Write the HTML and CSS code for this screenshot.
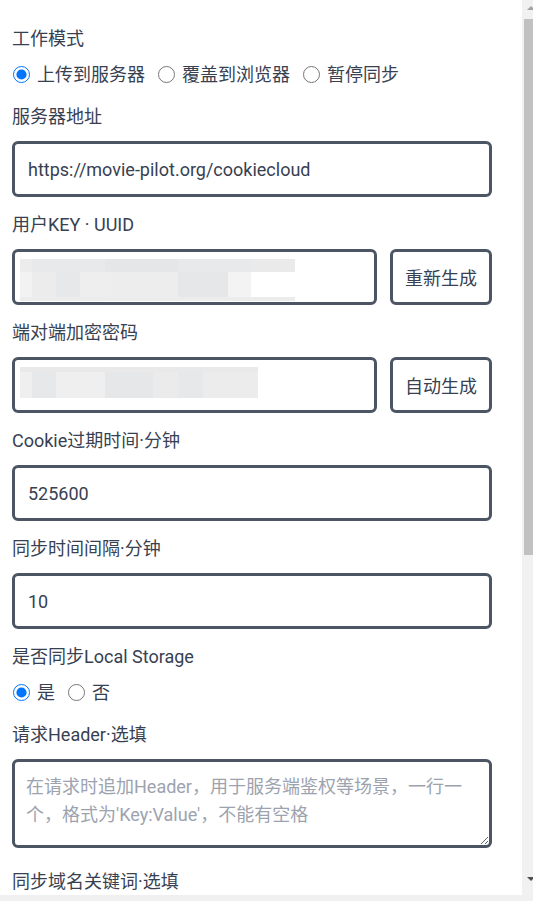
FILE: index.html
```html
<!DOCTYPE html>
<html lang="zh-CN">
<head>
<meta charset="utf-8">
<title>CookieCloud</title>
<link rel="stylesheet" href="styles.css">
</head>
<body>
<main class="form">
  <div class="label tight first">工作模式</div>
  <div class="radios">
    <label class="radio"><input type="radio" name="mode" checked><span>上传到服务器</span></label>
    <label class="radio"><input type="radio" name="mode"><span>覆盖到浏览器</span></label>
    <label class="radio"><input type="radio" name="mode"><span>暂停同步</span></label>
  </div>

  <div class="label">服务器地址</div>
  <input class="input" type="text" value="https://movie-pilot.org/cookiecloud">

  <div class="label">用户KEY · UUID</div>
  <div class="row">
    <div class="field">
      <input class="input" type="text" value="">
      <div class="mosaic mosaic-key">
        <div class="mrow mtop"><i class="t1"></i><i class="t2"></i><i class="t3"></i><i class="t2"></i><i class="t4"></i></div>
        <div class="mrow mmid"><i class="t5"></i><i class="t4"></i><i class="t1"></i><i class="t9"></i><i class="t6"></i><i class="t3"></i><i class="t7"></i><i class="t8"></i></div>
        <div class="mrow mbot"></div>
      </div>
    </div>
    <button class="btn" type="button">重新生成</button>
  </div>

  <div class="label">端对端加密密码</div>
  <div class="row">
    <div class="field">
      <input class="input" type="text" value="">
      <div class="mosaic mosaic-pwd">
        <div class="mrow ptop"></div>
        <div class="mrow pmid"><i class="p1"></i><i class="p2"></i><i class="p3"></i><i class="p4"></i><i class="p5"></i><i class="p6"></i><i class="p7"></i></div>
      </div>
    </div>
    <button class="btn" type="button">自动生成</button>
  </div>

  <div class="label">Cookie过期时间·分钟</div>
  <input class="input" type="text" value="525600">

  <div class="label">同步时间间隔·分钟</div>
  <input class="input" type="text" value="10">

  <div class="label tight">是否同步Local Storage</div>
  <div class="radios">
    <label class="radio"><input type="radio" name="ls" checked><span>是</span></label>
    <label class="radio"><input type="radio" name="ls"><span>否</span></label>
  </div>

  <div class="label">请求Header·选填</div>
  <textarea class="textarea" placeholder="在请求时追加Header，用于服务端鉴权等场景，一行一个，格式为'Key:Value'，不能有空格"></textarea>

  <div class="label after-area">同步域名关键词·选填</div>
  <textarea class="textarea" placeholder=""></textarea>
</main>

<div class="vscroll">
  <div class="arrow up"></div>
  <div class="thumb"></div>
  <div class="arrow down"></div>
</div>
<div class="hstrip"></div>
</body>
</html>
```
FILE: styles.css
```css
* { box-sizing: border-box; }
html, body {
  margin: 0;
  padding: 0;
  height: 100%;
  overflow: hidden;
  background: #ffffff;
}
body {
  font-family: Roboto, "Noto Sans CJK SC", sans-serif;
  font-size: 18px;
  color: #374151;
}
.form {
  width: 480px;
  margin-left: 12px;
  display: flex;
  flex-direction: column;
}
.label {
  line-height: 27px;
  height: 27px;
  margin-top: 14px;
  margin-bottom: 11px;
  color: #374151;
  white-space: nowrap;
}
.label.tight { margin-bottom: 0; }
.label.first { margin-top: 25px; }
.radios {
  display: flex;
  align-items: center;
  gap: 12px;
  height: 27px;
  margin-top: 9px;
}
.radios + .label { margin-top: 15px; }
.radio {
  display: flex;
  align-items: center;
  gap: 7px;
  line-height: 27px;
}
.radio input {
  width: 17px;
  height: 17px;
  margin: 0 0 0 1px;
  accent-color: #0075ff;
}
.input {
  display: block;
  width: 100%;
  height: 56px;
  border: 3px solid #4b5563;
  border-radius: 6px;
  padding: 0 13px;
  font: inherit;
  color: #374151;
  background: #fff;
  outline: none;
}
.row {
  display: flex;
  gap: 13px;
}
.field {
  position: relative;
  flex: 1;
}
.btn {
  width: 102px;
  height: 56px;
  border: 3px solid #4b5563;
  border-radius: 6px;
  background: #fff;
  font: inherit;
  color: #374151;
  padding: 0;
}
.textarea {
  display: block;
  width: 100%;
  height: 89px;
  border: 3px solid #4b5563;
  border-radius: 6px;
  padding: 11px 11px;
  font: inherit;
  line-height: 28px;
  color: #374151;
  background: #fff;
  resize: vertical;
  outline: none;
}
.textarea::placeholder { color: #9ca3af; }
.label.after-area { margin-top: 20px; }

/* pixelated (blurred) secrets */
.mosaic {
  position: absolute;
  display: flex;
  flex-direction: column;
}
.mosaic-key { left: 8px; top: 10px; width: 275px; height: 42px; }
.mosaic-pwd { left: 8px; top: 10px; width: 238px; height: 31px; }
.mrow { display: flex; }
.mrow i { display: block; height: 100%; }
.mtop { height: 13px; }
.mtop .t1 { width: 12px; background: #ececed; }
.mtop .t2 { width: 73px; background: #e8e9ea; }
.mtop .t3 { width: 73px; background: #e5e6e7; }
.mtop .t4 { width: 44px; background: #eaeaea; }
.mmid { height: 25px; }
.mmid .t5 { width: 12px; background: #f2f2f2; }
.mmid .t4 { width: 24px; background: #ececec; }
.mmid .t1 { width: 24px; background: #e7e8e9; }
.mmid .t9 { width: 25px; background: #eeeeee; }
.mmid .t6 { width: 73px; background: #ededee; }
.mmid .t3 { width: 50px; background: #e6e7e8; }
.mmid .t7 { width: 23px; background: #f3f3f3; }
.mmid .t8 { width: 44px; background: #ffffff; }
.mbot { height: 4px; background: #ececec; }
.ptop { height: 5px; background: #e9e9ea; }
.pmid { height: 26px; }
.pmid .p1 { width: 12px; background: #efefef; }
.pmid .p2 { width: 24px; background: #e7e8e9; }
.pmid .p3 { width: 49px; background: #efefef; }
.pmid .p4 { width: 48px; background: #e6e7e8; }
.pmid .p5 { width: 25px; background: #ebebec; }
.pmid .p6 { width: 25px; background: #e7e8e9; }
.pmid .p7 { width: 55px; background: #ececec; }

/* window scrollbar chrome */
.vscroll {
  position: fixed;
  top: 0;
  right: 0;
  width: 11px;
  height: 895px;
  background: #f1f1f1;
}
.vscroll .thumb {
  position: absolute;
  left: 2px;
  right: 0;
  top: 19px;
  height: 536px;
  background: #c1c1c1;
}
.vscroll .arrow {
  position: absolute;
  width: 0;
  height: 0;
  border-left: 4px solid transparent;
  border-right: 4px solid transparent;
}
.vscroll .arrow.up { top: 6px; right: -2px; border-bottom: 4px solid #a3a3a3; }
.vscroll .arrow.down { bottom: 14px; right: -2px; border-top: 4px solid #505050; }
.hstrip {
  position: fixed;
  left: 0;
  right: 0;
  bottom: 0;
  height: 6px;
  background: #f0f0f0;
}
```
